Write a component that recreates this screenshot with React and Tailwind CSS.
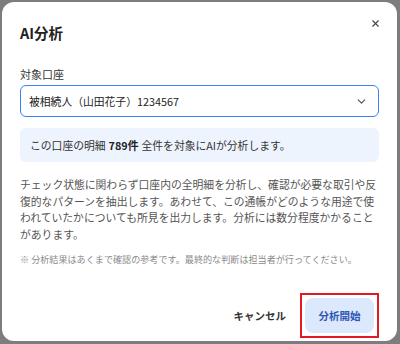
import { ChevronDown, X } from "lucide-react";

export default function App() {
  return (
    <div
      className="h-[344px] w-[400px] overflow-hidden bg-[#7d7d7d] pl-[2px] pt-[2px]"
      style={{ fontFamily: '"Noto Sans CJK JP", "Noto Sans", sans-serif' }}
    >
      <div className="relative flex h-[339px] w-[395px] flex-col rounded-[12px] bg-white px-[18px]">
        <button type="button" className="absolute right-[16px] top-[16px] text-[#444]">
          <X size={11} strokeWidth={2.4} />
        </button>

        <h2 className="mt-[20px] text-[14.5px] font-semibold leading-[22px] text-[#222]">AI分析</h2>

        <label className="mt-[22px] text-[11px] leading-[16px] text-[#333]">対象口座</label>
        <div className="mt-[3px] flex h-[32px] items-center justify-between rounded-[6px] border-[1.5px] border-[#3b82f6] pl-[8px] pr-[10px]">
          <span className="text-[10.8px] text-[#222]">被相続人（山田花子）1234567</span>
          <ChevronDown size={13} strokeWidth={2.2} className="text-[#555]" />
        </div>

        <div className="mt-[11px] flex h-[34px] items-center rounded-[6px] bg-[#eef4fd] px-[10px] text-[10.8px] text-[#333]">
          この口座の明細 <span className="mx-[3px] font-bold text-[#222]">789件</span> 全件を対象にAIが分析します。
        </div>

        <p className="mt-[14px] text-[10.8px] leading-[16.6px] text-[#555]">
          チェック状態に関わらず口座内の全明細を分析し、確認が必要な取引や反復的なパターンを抽出します。あわせて、この通帳がどのような用途で使われていたかについても所見を出力します。分析には数分程度かかることがあります。
        </p>

        <p className="mt-[10px] text-[9.1px] leading-[14px] text-[#8a8a8a]">
          ※ 分析結果はあくまで確認の参考です。最終的な判断は担当者が行ってください。
        </p>

        <div className="mt-auto mb-[3px] flex items-center justify-end gap-[14px]">
          <button type="button" className="text-[10.5px] font-bold text-[#333]">
            キャンセル
          </button>
          <div className="border-2 border-[#e01b24] p-[3px]">
            <button
              type="button"
              className="flex h-[35px] w-[69px] items-center justify-center rounded-[8px] bg-[#dce8fb] text-[10.5px] font-semibold text-[#2f55b5]"
            >
              分析開始
            </button>
          </div>
        </div>
      </div>
    </div>
  );
}
